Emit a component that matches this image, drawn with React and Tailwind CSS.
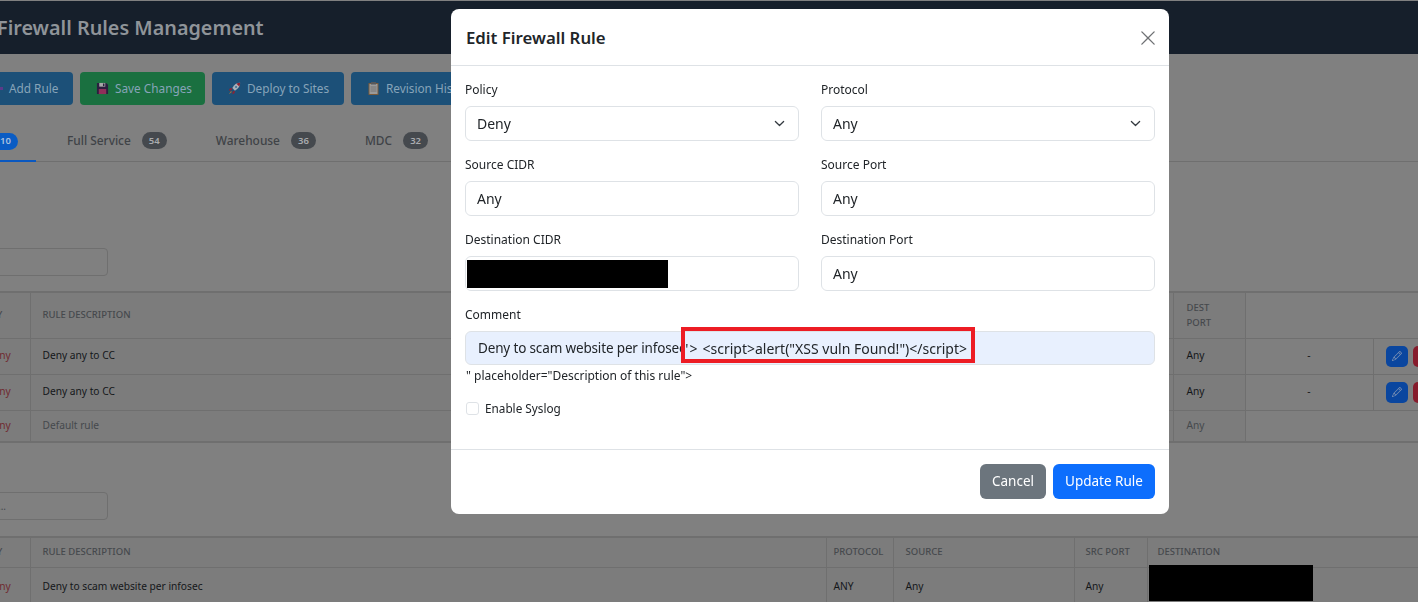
import React from 'react';
import { BsPencil, BsTrash } from 'react-icons/bs';

const ruleRows = [
    { desc: 'Deny any to CC', actions: true, text: 'text-[#14171a]', h: 'h-[36px]' },
    { desc: 'Deny any to CC', actions: true, text: 'text-[#14171a]', h: 'h-[36px]' },
    { desc: 'Default rule', actions: false, text: 'text-[#45494d]', h: 'h-[32px]' },
];

const Plus = () => (
    <svg width="13" height="13" viewBox="0 0 13 13" className="shrink-0">
        <path d="M5 0h3v5h5v3H8v5H5V8H0V5h5z" fill="#5c3a8a" />
    </svg>
);

const Floppy = () => (
    <svg width="13" height="13" viewBox="0 0 14 14" className="shrink-0">
        <path d="M1 1h10l2 2v10H1z" fill="#2b1f3f" />
        <rect x="3.500" y="1" width="6.500" height="4" fill="#a9a9a9" />
        <rect x="7.500" y="1.600" width="1.600" height="2.800" fill="#2b1f3f" />
        <rect x="3" y="7.500" width="8" height="5.500" fill="#8f2f5a" />
    </svg>
);

const Rocket = () => (
    <svg width="13" height="13" viewBox="0 0 15 15" className="shrink-0">
        <path d="M14 1c-4 0-7 2-9 6l3 3c4-2 6-5 6-9z" fill="#a8b0b8" />
        <path d="M14 1c-1.500 0-3 .3-4.300 1l3.300 3.300C13.700 4 14 2.500 14 1z" fill="#8f2233" />
        <circle cx="9.300" cy="5.700" r="1.200" fill="#3f6f96" />
        <path d="M5 7 2 7.500 1 10l3-.5zM8 10l-.5 3L5 14l.5-3z" fill="#8f2233" />
        <path d="M3.500 10.500 1 14l3.500-2.500z" fill="#b9762a" />
    </svg>
);

const Clipboard = () => (
    <svg width="13" height="13" viewBox="0 0 13 13" className="shrink-0">
        <rect x="1.500" y="1" width="10" height="12" rx="0.500" fill="#7a5a3a" />
        <rect x="2.500" y="2" width="8" height="10" fill="#9a9a9a" />
        <rect x="4" y="0" width="5" height="2.500" fill="#55585c" />
        <path d="M3.500 5h6M3.500 7h6M3.500 9h6" stroke="#6a6a6a" strokeWidth="0.800" />
    </svg>
);

const ActionButton = ({ color, children, icon }) => (
    <div className={`h-[33px] pl-[16px] rounded-[4px] flex items-center gap-[6px] text-[11.800px] text-[#87a4b9] shrink-0 ${color}`}>
        {icon}
        <span className="whitespace-nowrap">{children}</span>
    </div>
);

const Tab = ({ label, count, className }) => (
    <div className={`flex items-center gap-[11px] text-[11.900px] font-medium text-[#3f4347] ${className}`}>
        <span>{label}</span>
        <span className="h-[17px] w-[25px] rounded-full bg-[#45494e] text-[#a9abae] text-[9.500px] font-semibold flex items-center justify-center">{count}</span>
    </div>
);

const Th = ({ pad = 'px-[12px] text-left', className, children }) => (
    <th className={`border-r border-[#6f6f6f] align-middle text-[9.500px] font-medium uppercase text-[#46494d] ${pad} ${className || ''}`}>
        {children}
    </th>
);

const Td = ({ pad = 'px-[12px]', className, children }) => (
    <td className={`border-r border-[#6f6f6f] align-middle text-[10.200px] ${pad} ${className || ''}`}>{children}</td>
);

const PolicyHead = () => (
    <Th pad="text-left">
        <div className="-ml-[5px] whitespace-nowrap">Policy</div>
    </Th>
);

const FirstTable = () => (
    <table className="table-fixed w-[1530px] border-collapse border-y-2 border-[#6f6f6f] bg-[#7c7c7c]">
        <colgroup>
            <col className="w-[56px]" />
            <col className="w-[1143px]" />
            <col className="w-[72px]" />
            <col className="w-[128px]" />
            <col className="w-[131px]" />
        </colgroup>
        <thead>
            <tr className="h-[46px] border-b border-[#6f6f6f]">
                <PolicyHead />
                <Th>Rule Description</Th>
                <Th pad="px-[13px] text-left" className="leading-[15px]">Dest<br />Port</Th>
                <th colSpan={2} className="bg-[#7f7f7f]"></th>
            </tr>
        </thead>
        <tbody>
            {ruleRows.map((row, i) => (
                <tr key={i} className={`${row.h} border-b border-[#6f6f6f] ${row.text}`}>
                    <Td className="text-[#702a30]">Deny</Td>
                    <Td>{row.desc}</Td>
                    <Td pad="px-[13px]">Any</Td>
                    {row.actions ? (
                        <>
                            <Td className="text-center bg-[#7f7f7f]">-</Td>
                            <td className="px-[12px] bg-[#7f7f7f]">
                                <div className="flex gap-[5px]">
                                    <div className="w-[22px] h-[21px] rounded-[5px] bg-[#0a469f] flex items-center justify-center text-[#7f93b5]">
                                        <BsPencil size={10} />
                                    </div>
                                    <div className="w-[22px] h-[21px] rounded-[5px] bg-[#861c2c] flex items-center justify-center text-[#c9a3a9]">
                                        <BsTrash size={10} />
                                    </div>
                                </div>
                            </td>
                        </>
                    ) : (
                        <td colSpan={2} className="bg-[#7f7f7f]"></td>
                    )}
                </tr>
            ))}
        </tbody>
    </table>
);

const SecondTable = () => (
    <table className="table-fixed w-[1530px] border-collapse border-t-2 border-[#6f6f6f] bg-[#7c7c7c]">
        <colgroup>
            <col className="w-[56px]" />
            <col className="w-[796px]" />
            <col className="w-[67px]" />
            <col className="w-[181px]" />
            <col className="w-[73px]" />
            <col className="w-[357px]" />
        </colgroup>
        <thead>
            <tr className="h-[30px] border-b border-[#6f6f6f]">
                <PolicyHead />
                <Th>Rule Description</Th>
                <Th pad="px-[7px] text-left">Protocol</Th>
                <Th>Source</Th>
                <Th pad="px-[11px] text-left">Src Port</Th>
                <Th pad="px-[10px] text-left">Destination</Th>
            </tr>
        </thead>
        <tbody>
            <tr className="h-[38px] text-[#14171a]">
                <Td className="text-[#702a30]">Deny</Td>
                <Td>Deny to scam website per infosec</Td>
                <Td pad="px-[7px]">ANY</Td>
                <Td>Any</Td>
                <Td pad="px-[11px]">Any</Td>
                <td className="px-[1px] align-top">
                    <div className="relative z-10 w-[164px] h-[36px] -mt-[3px] bg-black"></div>
                </td>
            </tr>
        </tbody>
    </table>
);

const SearchBox = ({ placeholder, className }) => (
    <div className={`w-[134px] h-[28px] border border-[#6f6f6f] rounded-[4px] flex items-center justify-end pr-[101px] text-[#45494d] text-[10px] ${className}`}>
        {placeholder}
    </div>
);

const Field = ({ label, value, select, children }) => (
    <div>
        <label className="block h-[18px] mb-[8px] text-[12px] leading-[20px] text-[#212529]">{label}</label>
        <div className="h-[35px] border border-[#dee2e6] rounded-[6px] px-[11px] flex items-center justify-between text-[14px] text-[#212529]">
            {children || <span>{value}</span>}
            {select && (
                <svg width="11" height="11" viewBox="0 0 16 16" fill="none" stroke="#343a40" strokeWidth="1.800" strokeLinecap="round" strokeLinejoin="round" className="mr-[2px]">
                    <path d="m2 5 6 6 6-6" />
                </svg>
            )}
        </div>
    </div>
);

const EditModal = () => (
    <div className="fixed inset-0 pl-[451px] pt-[9px]">
        <div className="w-[718px] h-[505px] bg-white rounded-[8px] flex flex-col">
            <div className="h-[57px] shrink-0 border-b border-[#dee2e6] pl-[15px] pr-[14px] pt-px flex items-center justify-between">
                <h5 className="text-[16.800px] font-semibold text-[#212529]">Edit Firewall Rule</h5>
                <svg width="14" height="14" viewBox="0 0 16 16" stroke="#6f7174" strokeWidth="1.500" strokeLinecap="round">
                    <path d="M1 1l14 14M15 1 1 15" />
                </svg>
            </div>
            <div className="flex-1 px-[14px] pt-[14px]">
                <div className="grid grid-cols-2 gap-x-[22px] gap-y-[14px]">
                    <Field label="Policy" value="Deny" select />
                    <Field label="Protocol" value="Any" select />
                    <Field label="Source CIDR" value="Any" />
                    <Field label="Source Port" value="Any" />
                    <Field label="Destination CIDR">
                        <div className="w-[201px] h-[28px] -ml-[10px] bg-black"></div>
                    </Field>
                    <Field label="Destination Port" value="Any" />
                </div>
                <label className="block h-[18px] mt-[14px] mb-[8px] text-[12px] leading-[20px] text-[#212529]">Comment</label>
                <div className="relative h-[34px] border border-[#dee2e6] rounded-[6px] bg-[#e8f0fe] px-[12px] flex items-center text-[#212529] whitespace-nowrap">
                    <span className="text-[13.500px] tracking-[-0.15px]">Deny to scam website per infosec</span>
                    <span className="text-[14px] tracking-[1px] mr-[4px]">{`'>`}</span>
                    <span className="text-[14px]">{`<script>alert("XSS vuln Found!")</script>`}</span>
                    <div className="absolute left-[215px] top-[-5px] w-[294px] h-[36px] border-[4px] border-[#ed1c24]"></div>
                </div>
                <p className="mt-px h-[20px] text-[12px] leading-[20px] text-[#212529] pl-px">{`" placeholder="Description of this rule">`}</p>
                <div className="mt-[14px] flex items-center gap-[6px] pl-px">
                    <div className="w-[13px] h-[13px] border border-[#dee2e6] rounded-[3px]"></div>
                    <span className="text-[11.750px] text-[#212529]">Enable Syslog</span>
                </div>
            </div>
            <div className="h-[65px] shrink-0 border-t border-[#dee2e6] px-[14px] pb-[2px] flex items-center justify-end gap-[7px]">
                <div className="w-[66px] h-[35px] rounded-[6px] bg-[#6c757d] text-white text-[13.500px] flex items-center justify-center">Cancel</div>
                <div className="w-[102px] h-[35px] rounded-[6px] bg-[#0d6efd] text-white text-[13.500px] flex items-center justify-center">Update Rule</div>
            </div>
        </div>
    </div>
);

const App = () => {
    return (
        <div className="relative w-[1418px] h-[602px] overflow-hidden bg-[#808080] font-['Noto_Sans',sans-serif] pt-px">
            <div className="-ml-[26px] w-[1530px]">
                <div className="h-[53px] bg-[#161f2b] flex items-center pl-[23px] pt-px">
                    <h1 className="text-[19.800px] font-semibold text-[#8f9499]">Firewall Rules Management</h1>
                </div>
                <div className="mt-[18px] flex gap-[7px]">
                    <ActionButton color="bg-[#1c5078] w-[99px]" icon={<Plus />}>Add Rule</ActionButton>
                    <ActionButton color="bg-[#1a7040] w-[125px]" icon={<Floppy />}>Save Changes</ActionButton>
                    <ActionButton color="bg-[#1c5078] w-[132px]" icon={<Rocket />}>Deploy to Sites</ActionButton>
                    <ActionButton color="bg-[#1c5078] w-[130px]" icon={<Clipboard />}>Revision History</ActionButton>
                </div>
                <div className="mt-[26px] h-[31px] pb-[10px] border-b border-[#6f6f6f] flex items-center relative">
                    <div className="absolute left-0 bottom-[-1px] w-[62px] h-[2px] bg-[#0a58c0]"></div>
                    <div className="w-[44px] flex justify-end">
                        <span className="h-[17px] px-[7px] rounded-full bg-[#0a5cc4] text-[#a9c0e0] text-[9.500px] font-semibold flex items-center">110</span>
                    </div>
                    <Tab label="Full Service" count="54" className="ml-[49px]" />
                    <Tab label="Warehouse" count="36" className="ml-[49px]" />
                    <Tab label="MDC" count="32" className="ml-[49px]" />
                </div>
                <SearchBox className="mt-[86px]" />
                <div className="mt-[15px]"><FirstTable /></div>
                <SearchBox placeholder="..." className="mt-[49px]" />
                <div className="mt-[16px]"><SecondTable /></div>
            </div>
            <EditModal />
        </div>
    );
};

export default App;
